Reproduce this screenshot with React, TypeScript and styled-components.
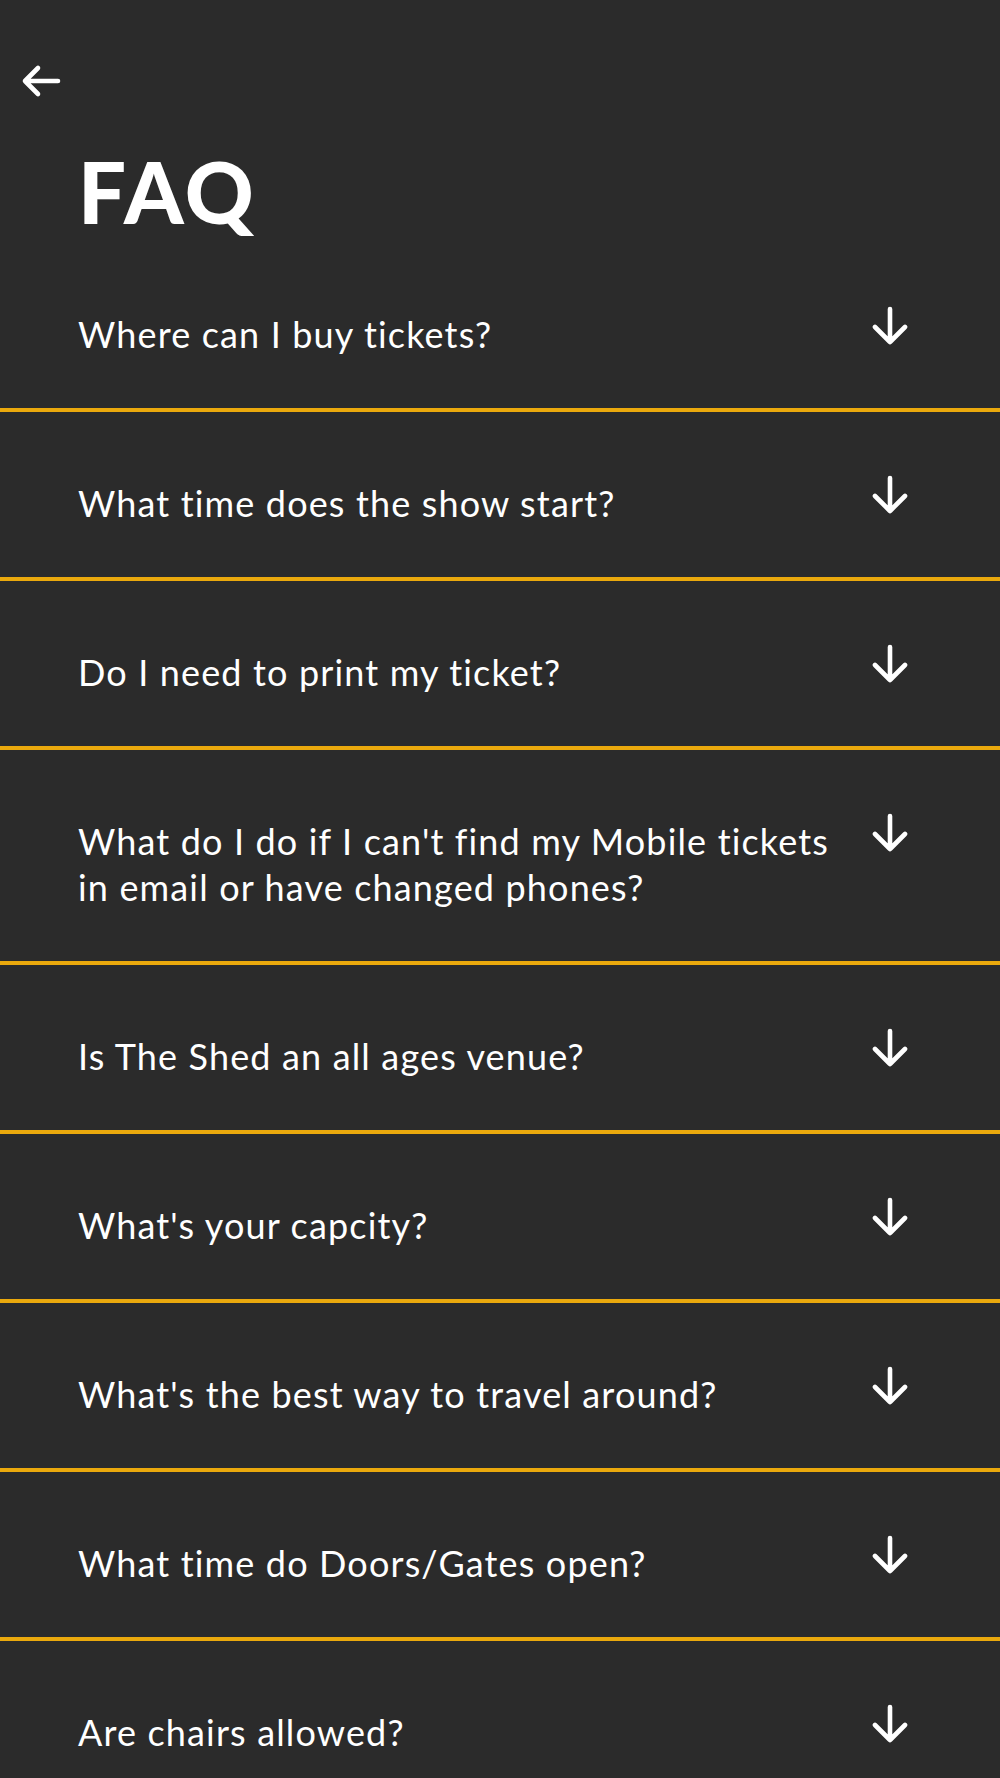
import styled, { createGlobalStyle } from 'styled-components';

const faqs = [
	'Where can I buy tickets?',
	'What time does the show start?',
	'Do I need to print my ticket?',
	"What do I do if I can't find my Mobile tickets in email or have changed phones?",
	'Is The Shed an all ages venue?',
	"What's your capcity?",
	"What's the best way to travel around?",
	'What time do Doors/Gates open?',
	'Are chairs allowed?',
];

const GlobalStyle = createGlobalStyle`
	html, body {
		margin: 0;
		padding: 0;
		background: #2b2b2b;
	}
	body {
		font-family: Lato, 'Noto Sans', sans-serif;
		color: #ffffff;
	}
`;

const Page = styled.div`
	width: 1000px;
	min-height: 1778px;
	background: #2b2b2b;
	overflow: hidden;
`;

const BackButton = styled.button`
	display: block;
	margin: 63px 0 0 20px;
	padding: 0;
	width: 42px;
	height: 36px;
	background: none;
	border: none;
	cursor: pointer;
`;

const Title = styled.h1`
	margin: 50px 0 0 78px;
	font-family: Lato, sans-serif;
	font-weight: 900;
	font-size: 85px;
	line-height: 84px;
	letter-spacing: 3px;
	color: #ffffff;
`;

const List = styled.ul`
	list-style: none;
	margin: 10px 0 0;
	padding: 0;
`;

const Item = styled.li`
	display: flex;
	align-items: flex-start;
	gap: 20px;
	padding: 68px 92px 51px 78px;
	border-bottom: 4px solid #eaa90d;
`;

const Question = styled.span`
	flex: 1;
	font-size: 36px;
	line-height: 46px;
	font-weight: 400;
	letter-spacing: 1.15px;
	color: #ffffff;
`;

const ArrowIcon = styled.svg`
	flex-shrink: 0;
	margin-top: -6px;
`;

const BackArrow = () => (
	<svg width="42" height="36" viewBox="0 0 42 36" fill="none">
		<path
			d="M5 18h33M18 5 5 18l13 13"
			stroke="#fff"
			strokeWidth="4.6"
			strokeLinecap="round"
			strokeLinejoin="round"
		/>
	</svg>
);

const DownArrow = () => (
	<ArrowIcon width="36" height="40" viewBox="0 0 36 40" fill="none">
		<path
			d="M18 4v33M3 22l15 15 15-15"
			stroke="#fff"
			strokeWidth="4.6"
			strokeLinecap="round"
			strokeLinejoin="round"
		/>
	</ArrowIcon>
);

const App = () => {
	return (
		<Page>
			<GlobalStyle />
			<BackButton aria-label="Back">
				<BackArrow />
			</BackButton>
			<Title>FAQ</Title>
			<List>
				{faqs.map((q) => (
					<Item key={q}>
						<Question>{q}</Question>
						<DownArrow />
					</Item>
				))}
			</List>
		</Page>
	);
};

export default App;
